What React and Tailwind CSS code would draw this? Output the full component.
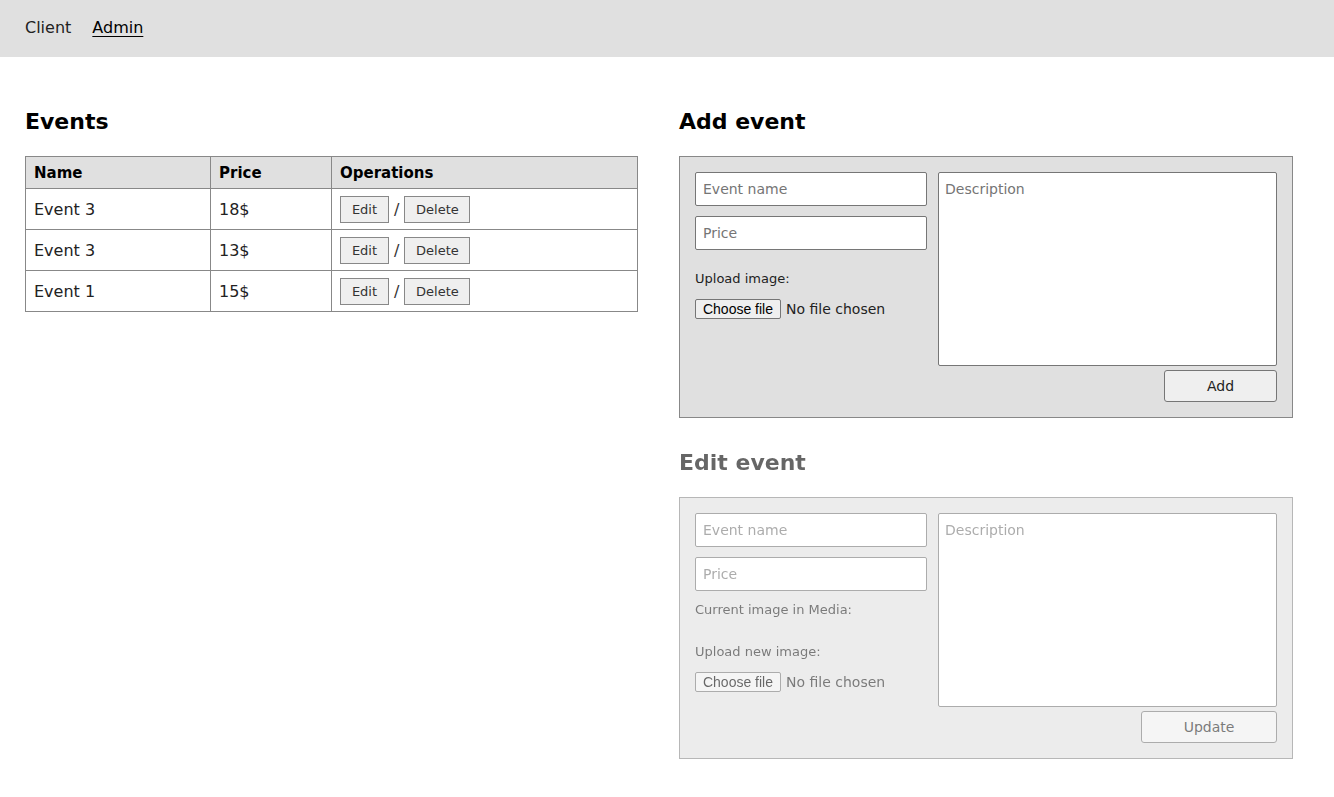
import React from 'react';

const events = [
  { id: 1, name: 'Event 3', price: '18$' },
  { id: 2, name: 'Event 3', price: '13$' },
  { id: 3, name: 'Event 1', price: '15$' },
];

const FileField = () => (
  <div className="flex items-center h-[20px]">
    <span className="h-[20px] w-[86px] flex items-center justify-center border border-[#767676] rounded-[2px] bg-[#efefef] text-[14px] text-black font-['Liberation_Sans',sans-serif]">
      Choose file
    </span>
    <span className="ml-[5px] text-[14px] text-[#222]">No file chosen</span>
  </div>
);

const TextInput = ({ placeholder }) => (
  <input
    placeholder={placeholder}
    className="w-full h-[34px] px-[7px] border border-[#767676] rounded-[2px] bg-white text-[14px] placeholder:text-[#757575] focus:outline-none"
  />
);

const Description = () => (
  <textarea
    placeholder="Description"
    className="w-full h-[194px] px-[6px] py-[6px] border border-[#767676] rounded-[2px] bg-white text-[14px] placeholder:text-[#757575] resize-none focus:outline-none"
  />
);

const App = () => {
  return (
    <div className="min-h-screen bg-white text-[#222] font-['DejaVu_Sans',sans-serif]">
      {/* Nav */}
      <nav className="h-[57px] bg-[#e0e0e0] flex items-center px-[25px] gap-[21px] text-[16px] pb-[1px]">
        <a className="text-[#222] cursor-pointer">Client</a>
        <a className="text-black underline underline-offset-[3px] cursor-pointer">Admin</a>
      </nav>

      <main className="grid grid-cols-[613px_614px] gap-[41px] pl-[25px] pt-[50px]">
        {/* Events list */}
        <section>
          <h2 className="text-[22px] font-bold leading-[30px] mb-[19px] text-black">Events</h2>
          <table className="w-full border-collapse text-left">
            <thead>
              <tr className="bg-[#e0e0e0] h-[32px] text-[15px] font-bold text-black">
                <th className="border border-[#888] px-[8px] pt-[1px] w-[185px]">Name</th>
                <th className="border border-[#888] px-[8px] pt-[1px] w-[121px]">Price</th>
                <th className="border border-[#888] px-[8px] pt-[1px]">Operations</th>
              </tr>
            </thead>
            <tbody>
              {events.map(ev => (
                <tr key={ev.id} className="h-[41px] text-[16px]">
                  <td className="border border-[#888] px-[8px] pt-[1px]">{ev.name}</td>
                  <td className="border border-[#888] px-[8px] pt-[1px]">{ev.price}</td>
                  <td className="border border-[#888] px-[8px] pt-[1px]">
                    <div className="flex items-center">
                      <button className="w-[49px] h-[27px] border border-[#888] bg-[#efefef] text-[13px] text-[#333]">Edit</button>
                      <span className="mx-[5px] text-[16px] text-[#333]">/</span>
                      <button className="w-[66px] h-[27px] border border-[#888] bg-[#efefef] text-[13px] text-[#333]">Delete</button>
                    </div>
                  </td>
                </tr>
              ))}
            </tbody>
          </table>
        </section>

        {/* Forms */}
        <section>
          <h2 className="text-[22px] font-bold leading-[30px] mb-[19px] text-black">Add event</h2>
          <div className="bg-[#e0e0e0] border border-[#888] p-[15px]">
            <div className="grid grid-cols-[232px_339px] gap-[11px]">
              <div className="flex flex-col">
                <TextInput placeholder="Event name" />
                <div className="mt-[10px]"><TextInput placeholder="Price" /></div>
                <p className="mt-[19px] text-[13px] leading-[20px]">Upload image:</p>
                <div className="mt-[10px]"><FileField /></div>
              </div>
              <div className="flex flex-col items-end">
                <Description />
                <button className="mt-[4px] w-[113px] h-[32px] border border-[#767676] rounded-[3px] bg-[#efefef] text-[14px] text-[#222]">Add</button>
              </div>
            </div>
          </div>

          <div className="opacity-60">
            <h2 className="text-[22px] font-bold leading-[30px] mt-[30px] mb-[19px] text-black">Edit event</h2>
            <div className="bg-[#e0e0e0] border border-[#888] p-[15px]">
              <div className="grid grid-cols-[232px_339px] gap-[11px]">
                <div className="flex flex-col">
                  <TextInput placeholder="Event name" />
                  <div className="mt-[10px]"><TextInput placeholder="Price" /></div>
                  <p className="mt-[9px] text-[13px] leading-[20px]">Current image in Media:</p>
                  <p className="mt-[22px] text-[13px] leading-[20px]">Upload new image:</p>
                  <div className="mt-[10px]"><FileField /></div>
                </div>
                <div className="flex flex-col items-end">
                  <Description />
                  <button className="mt-[4px] w-[136px] h-[32px] border border-[#767676] rounded-[3px] bg-[#efefef] text-[14px] text-[#222]">Update</button>
                </div>
              </div>
            </div>
          </div>
        </section>
      </main>
    </div>
  );
};

export default App;
